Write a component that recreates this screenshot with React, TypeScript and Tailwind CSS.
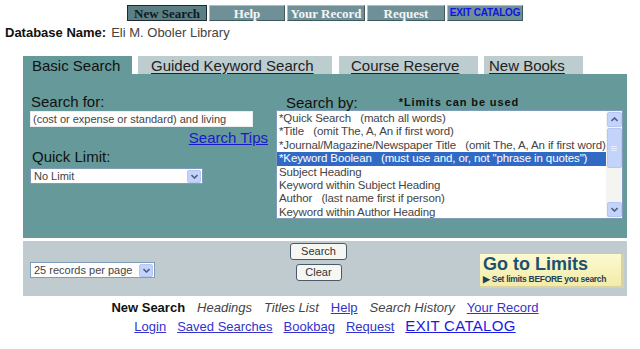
import React from "react";

const navBtn =
  "h-[16px] flex items-center justify-center border border-t-[#a9bfc4] border-l-[#a9bfc4] border-b-[#3d5a60] border-r-[#3d5a60] bg-[#6f9097] font-['Liberation_Serif',serif] font-bold text-[13px] text-[#f2f6f6] leading-none whitespace-nowrap";

const searchByItems = [
  "*Quick Search   (match all words)",
  "*Title   (omit The, A, An if first word)",
  "*Journal/Magazine/Newspaper Title   (omit The, A, An if first word)",
  "*Keyword Boolean   (must use and, or, not \"phrase in quotes\")",
  "Subject Heading",
  "Keyword within Subject Heading",
  "Author   (last name first if person)",
  "Keyword within Author Heading",
];

const Chevron = ({ up = false }: { up?: boolean }) => (
  <svg width="7" height="5" viewBox="0 0 7 5">
    <path
      d={up ? "M0.5 4 L3.5 1 L6.5 4" : "M0.5 1 L3.5 4 L6.5 1"}
      fill="none"
      stroke="#4d6185"
      strokeWidth="1.6"
    />
  </svg>
);

const FakeSelect = ({ label, width }: { label: string; width: string }) => (
  <div
    className={`${width} h-[16px] bg-white border border-[#7f9db9] flex items-center justify-between text-[11px] text-[#444] pl-[3px]`}
  >
    <span>{label}</span>
    <span className="w-[14px] h-[13px] mr-[1px] bg-[#c4d3fa] border border-[#b4c6f2] rounded-[2px] flex items-center justify-center">
      <Chevron />
    </span>
  </div>
);

const tabBase =
  "h-[18px] flex items-center text-[15px] leading-none text-[#222] bg-[#bccccf] underline underline-offset-2";

export default function App() {
  return (
    <div className="w-[640px] h-[349px] bg-white overflow-hidden font-['Liberation_Sans',Arial,sans-serif]">
      <nav className="flex pl-[127px] pt-[5px] gap-[2px]">
        <div className="h-[16px] w-[80px] flex items-center justify-center border border-[#1d2c30] bg-[#5c7e85] font-['Liberation_Serif',serif] font-bold text-[13px] text-[#0d1b22] leading-none whitespace-nowrap">
          New Search
        </div>
        <div className={`${navBtn} w-[76px]`}>Help</div>
        <div className={`${navBtn} w-[78px]`}>Your Record</div>
        <div className={`${navBtn} w-[78px]`}>Request</div>
        <div className="h-[16px] w-[76px] flex items-center justify-center border border-t-[#a9bfc4] border-l-[#a9bfc4] border-b-[#3d5a60] border-r-[#3d5a60] bg-[#6f9097] font-bold text-[10px] tracking-[-0.2px] text-[#1212e6] leading-none whitespace-nowrap">
          EXIT CATALOG
        </div>
      </nav>

      <div className="pl-[5px] mt-[3px] h-[16px] flex items-center gap-[5px] leading-none">
        <span className="text-[13px] text-[#111] font-bold">Database Name:</span>
        <span className="text-[13px] text-[#444]">Eli M. Oboler Library</span>
      </div>

      <div className="ml-[23px] w-[604px] mt-[16px]">
        <div className="flex h-[18px]">
          <div className="w-[109px] h-[18px] bg-[#669999] flex items-center pl-[9px] text-[15px] text-[#111] leading-none">
            Basic Search
          </div>
          <div className={`${tabBase} ml-[6px] w-[194px] pl-[13px]`}>Guided Keyword Search</div>
          <div className={`${tabBase} ml-[7px] w-[139px] pl-[12px]`}>Course Reserve</div>
          <div className={`${tabBase} ml-[6px] w-[99px] pl-[5px]`}>New Books</div>
        </div>

        <div className="h-[164px] bg-[#669999] flex">
          <div className="w-[246px] pl-[7px] pt-[20px]">
            <div className="text-[15px] leading-[16px] text-[#111] pl-[1px]">Search for:</div>
            <div className="mt-[1px] w-[223px] h-[16px] bg-white border border-[#e8eeee] flex items-center pl-[2px] text-[11px] text-[#444]">
              (cost or expense or standard) and living
            </div>
            <div className="mt-[3px] text-right text-[15px] leading-[16px] text-[#1a1acc] underline pr-[1px]">
              Search Tips
            </div>
            <div className="mt-[3px] text-[15px] leading-[16px] text-[#111] pl-[2px]">Quick Limit:</div>
            <div className="mt-[3px]">
              <FakeSelect label="No Limit" width="w-[173px]" />
            </div>
          </div>

          <div className="pl-[7px] pt-[20px]">
            <div className="flex items-center h-[16px]">
              <span className="pl-[10px] text-[15px] leading-none text-[#111]">Search by:</span>
              <span className="ml-[41px] text-[11px] font-bold tracking-[0.9px] text-[#111] leading-none">
                *Limits can be used
              </span>
            </div>
            <div className="w-[347px] h-[109px] bg-white border border-[#7f9db9] flex">
              <div className="flex-1 min-w-0 overflow-hidden pt-[1px]">
                {searchByItems.map((item, i) => (
                  <div
                    key={i}
                    className={`h-[13.4px] leading-[13.4px] text-[11.5px] tracking-[-0.12px] whitespace-pre pl-[2px] ${
                      i === 3 ? "bg-[#316ac5] text-white" : "text-[#444]"
                    }`}
                  >
                    {item}
                  </div>
                ))}
              </div>
              <div className="w-[16px] shrink-0 bg-[#f4f4f0] flex flex-col items-center py-[1px]">
                <div className="w-[15px] h-[15px] bg-[#c4d3fa] border border-[#b4c6f2] rounded-[2px] flex items-center justify-center">
                  <Chevron up />
                </div>
                <div className="mt-[1px] w-[15px] h-[40px] bg-[#c4d3fa] border border-[#b4c6f2] rounded-[2px] flex flex-col items-center justify-center gap-[1px]">
                  <div className="w-[6px] h-[1px] bg-[#e8eefc]" />
                  <div className="w-[6px] h-[1px] bg-[#e8eefc]" />
                  <div className="w-[6px] h-[1px] bg-[#e8eefc]" />
                </div>
                <div className="flex-1" />
                <div className="w-[15px] h-[15px] bg-[#c4d3fa] border border-[#b4c6f2] rounded-[2px] flex items-center justify-center">
                  <Chevron />
                </div>
              </div>
            </div>
          </div>
        </div>

        <div className="mt-[3px] h-[55px] bg-[#bfcbcf] flex">
          <div className="ml-[7px] mt-[21px]">
            <FakeSelect label="25 records per page" width="w-[125px]" />
          </div>
          <div className="ml-[135px] w-[57px] flex flex-col items-center pt-[2px] gap-[4px]">
            <div className="w-[57px] h-[17px] bg-[#f6f6f2] border border-[#4a5a6a] rounded-[3px] flex items-center justify-center text-[11px] text-[#333]">
              Search
            </div>
            <div className="w-[46px] h-[17px] bg-[#f6f6f2] border border-[#4a5a6a] rounded-[3px] flex items-center justify-center text-[11px] text-[#333]">
              Clear
            </div>
          </div>
          <div className="ml-[133px] mt-[13px] w-[144px] h-[34px] bg-gradient-to-b from-[#fdfad0] to-[#f2eba8] border-r-[3px] border-b-[2px] border-[#d8d3a0] pl-[3px] pt-[1px] overflow-hidden">
            <div className="text-[18px] font-bold leading-[19px] text-[#1c5170]">Go to Limits</div>
            <div className="text-[8.5px] font-bold tracking-[-0.3px] leading-[11px] text-[#1e3f58] whitespace-nowrap">
              ▶ Set limits BEFORE you search
            </div>
          </div>
        </div>
      </div>

      <footer className="ml-[23px] w-[604px] pt-[3px] flex flex-col items-center text-[13px] leading-[18px]">
        <div className="flex gap-[12px]">
          <span className="font-bold text-[#111]">New Search</span>
          <span className="italic text-[#444]">Headings</span>
          <span className="italic text-[#444]">Titles List</span>
          <span className="text-[#3333cc] underline">Help</span>
          <span className="italic text-[#444]">Search History</span>
          <span className="text-[#3333cc] underline">Your Record</span>
        </div>
        <div className="flex gap-[11px] items-baseline">
          <span className="text-[#3333cc] underline">Login</span>
          <span className="text-[#3333cc] underline">Saved Searches</span>
          <span className="text-[#3333cc] underline">Bookbag</span>
          <span className="text-[#3333cc] underline">Request</span>
          <span className="text-[15px] tracking-[0.3px] text-[#1a1ae0] underline">EXIT CATALOG</span>
        </div>
      </footer>
    </div>
  );
}
